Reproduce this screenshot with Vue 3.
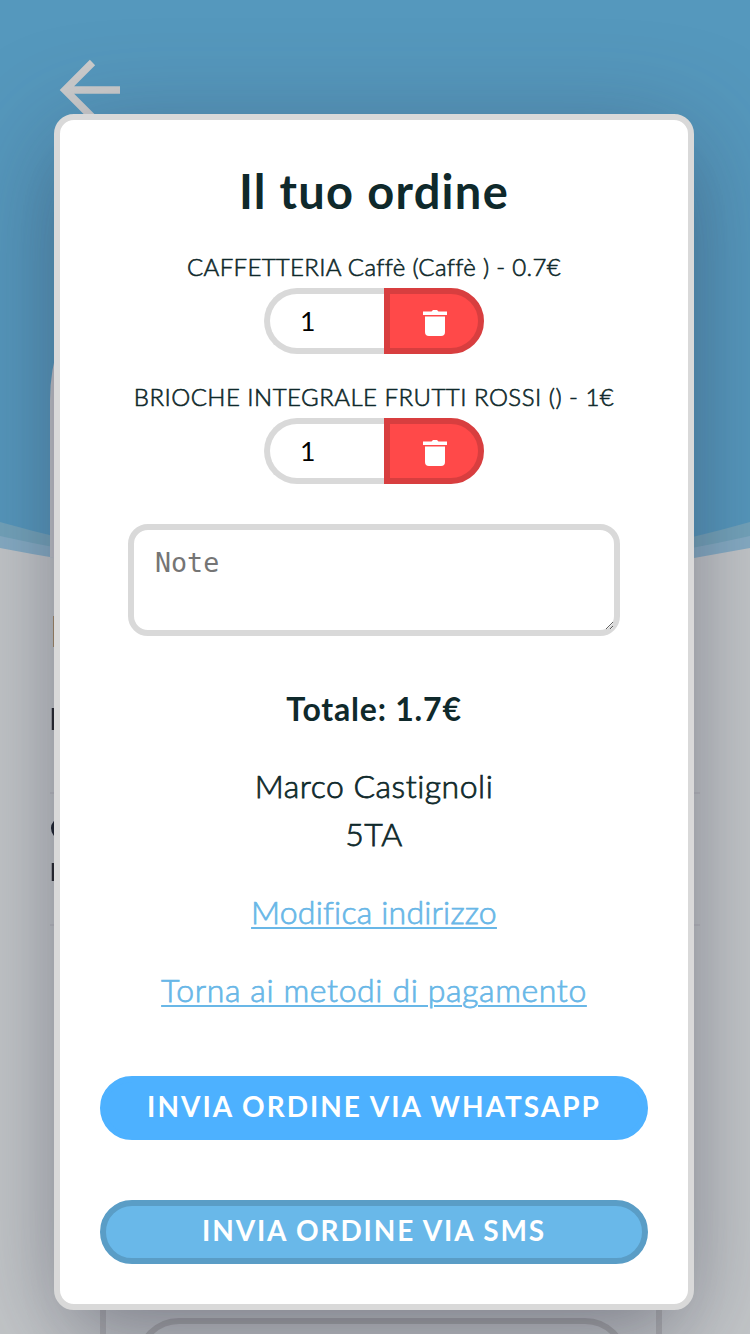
<script setup>
const items = [
  { name: 'CAFFETTERIA Caffè (Caffè ) - 0.7€', cls: 'first' },
  { name: 'BRIOCHE INTEGRALE FRUTTI ROSSI () - 1€', cls: 'second' },
]
</script>

<template>
  <main class="screen">
    <svg class="backdrop" viewBox="0 0 750 1334" aria-hidden="true">
      <rect width="750" height="1334" fill="#c4c7c9" />
      <path d="M0 0H750V548Q375 621 0 548Z" fill="#86adc5" />
      <path d="M0 0H750V536Q375 620 0 536Z" fill="#73a4bb" />
      <path d="M0 0H750V522Q375 628 0 522Z" fill="#5598bd" />
      <path d="M50 557V400Q50 370 60 340V560Z" fill="#c4c5ca" />
      <path d="M92.500 62.500L65 90L92.500 117.500M65 90H120" fill="none" stroke="#ccc" stroke-width="7.500" />
      <path d="M53.500 616V647" stroke="#a68a65" stroke-width="1" />
      <path d="M53 708V730M53 863V881" stroke="#222328" stroke-width="2.500" />
      <path d="M55 822Q50 828 55 835" fill="none" stroke="#1a1e29" stroke-width="3" />
      <path d="M50 793H700M50 925H700" stroke="#bbbcc0" stroke-width="2" />
      <path d="M103 1300V1334M659 1300V1334" stroke="#aeafb1" stroke-width="6" />
      <rect x="139" y="1321" width="486" height="90" rx="40" fill="none" stroke="#a9aaab" stroke-width="6" />
    </svg>

    <section class="card">
      <h1><span class="t-title">Il tuo ordine</span></h1>
      <div v-for="item in items" :key="item.name" class="item">
        <p><span :class="item.cls">{{ item.name }}</span></p>
        <div class="controls">
          <div class="qty">1</div>
          <button class="remove" aria-label="Rimuovi">
            <svg width="24" height="27" viewBox="0 0 24 27">
              <path fill="#fff" d="M0 1.500H8.500L10 0H14L15.500 1.500H24V5H0ZM2 6.500H22V22Q22 26 18 26H6Q2 26 2 22Z" />
            </svg>
          </button>
        </div>
      </div>
      <textarea class="note" placeholder="Note"></textarea>
      <p class="line total"><span class="t-total">Totale: 1.7€</span></p>
      <div class="address">
        <p class="line"><span class="t-name">Marco Castignoli</span></p>
        <p class="line"><span class="t-class">5TA</span></p>
      </div>
      <a class="line link"><span class="t-edit">Modifica indirizzo</span></a>
      <a class="line link"><span class="t-pay">Torna ai metodi di pagamento</span></a>
      <button class="send whatsapp"><span class="t-wa">INVIA ORDINE VIA WHATSAPP</span></button>
      <button class="send sms"><span class="t-sms">INVIA ORDINE VIA SMS</span></button>
    </section>
  </main>
</template>

<style>
body { margin: 0; overflow: hidden; }
</style>

<style scoped>
* { box-sizing: border-box; }
.screen {
  position: relative;
  height: 1334px;
  padding: 114px 0 0 54px;
  overflow: hidden;
  font-family: Lato, "Noto Sans", sans-serif;
  font-weight: 300;
  color: #0f292b;
}
.backdrop { position: absolute; left: 0; top: 0; width: 750px; height: 1334px; }
.card {
  position: relative;
  width: 640px;
  height: 1196px;
  padding: 40px;
  display: flex;
  flex-direction: column;
  align-items: center;
  background: #fff;
  border: 6px solid #d9d9d9;
  border-radius: 20px;
  box-shadow: 0 24px 108px rgba(50, 52, 76, 0.4), 0 40px 60px -30px rgba(50, 45, 60, 0.2);
}
h1, p { margin: 0; white-space: nowrap; }
h1 { height: 64px; line-height: 62px; font-size: 47px; font-weight: 700; }
.item { height: 130px; padding-top: 24px; display: flex; flex-direction: column; align-items: center; }
.item p { height: 40px; line-height: 38px; font-size: 24px; -webkit-text-stroke: 0.6px; }
.controls { display: flex; width: 220px; height: 66px; }
.qty {
  width: 120px;
  padding-left: 30px;
  border: 6px solid #d9d9d9;
  border-right: 0;
  border-radius: 33px 0 0 33px;
  font: 400 26.667px/54px Lato, sans-serif;
  color: #000;
}
.remove {
  display: flex;
  align-items: center;
  justify-content: center;
  width: 100px;
  padding: 4px 0 0 2px;
  border: 6px solid #d83e3f;
  border-radius: 0 33px 33px 0;
  background: #ff4949;
}
.note {
  flex: none;
  width: 492px;
  height: 112px;
  margin: 40px 0 0;
  padding: 17px 21px;
  border: 6px solid #d9d9d9;
  border-radius: 20px;
  font: 26.667px/32px "DejaVu Sans Mono", monospace;
  resize: both;
  outline: none;
}
.note::placeholder { color: #757575; }
.line { height: 48px; line-height: 44px; font-size: 32px; white-space: nowrap; -webkit-text-stroke: 0.75px; }
.total { margin-top: 50px; line-height: 46px; font-weight: 700; -webkit-text-stroke: 0; }
.address { margin-top: 30px; text-align: center; }
.link { margin-top: 30px; color: #69b7e7; text-decoration: underline; text-decoration-thickness: 1.5px; text-underline-offset: 3px; }
.send {
  flex: none;
  width: 548px;
  height: 64px;
  padding: 0 0 4px;
  border: 6px solid #4db1ff;
  border-radius: 32px;
  background: #4db1ff;
  color: #fff;
  font: 700 28px Lato, sans-serif;
  white-space: nowrap;
}
.whatsapp { margin-top: 60px; }
.sms { margin-top: 60px; border-color: #5a9dc6; background: #69b8e9; }
.t-title { letter-spacing: 1.3px; }
.first { letter-spacing: 0.32px; }
.second { letter-spacing: 0.48px; }
.t-total { letter-spacing: 0.8px; }
.t-name { letter-spacing: 0.5px; }
.t-class { letter-spacing: 0.6px; }
.t-edit { letter-spacing: 0.2px; }
.t-pay { letter-spacing: 0.62px; }
.t-wa { letter-spacing: 2px; }
.t-sms { letter-spacing: 1.85px; }
</style>
